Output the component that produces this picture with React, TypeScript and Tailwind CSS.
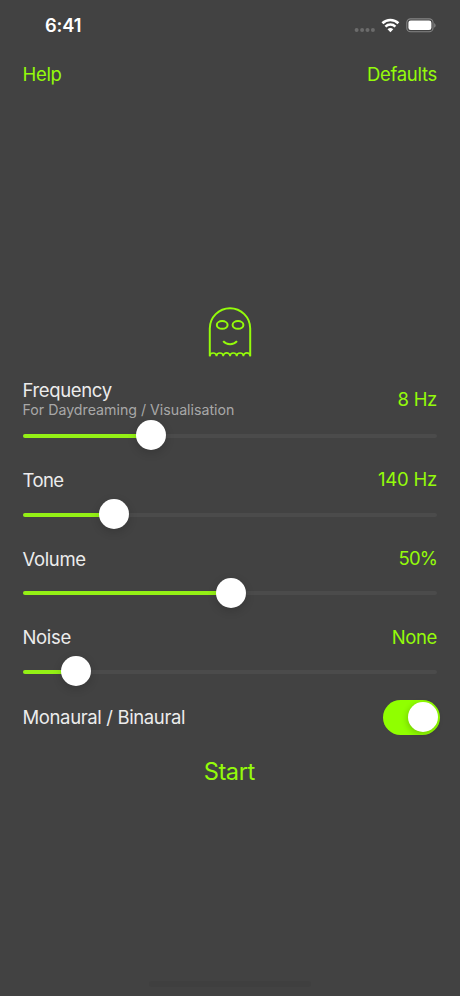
type Setting = {
  label: string;
  hint?: string;
  value: string;
  // thumb centre, in px from the start of the track
  position: number;
  labelTracking: string;
  valueTracking: string;
};

const settings: Setting[] = [
  { label: "Frequency", hint: "For Daydreaming / Visualisation", value: "8 Hz", position: 128.2, labelTracking: "tracking-[-0.35px]", valueTracking: "tracking-[-0.3px]" },
  { label: "Tone", value: "140 Hz", position: 91.5, labelTracking: "tracking-[-0.6px]", valueTracking: "tracking-[-0.2px]" },
  { label: "Volume", value: "50%", position: 208, labelTracking: "tracking-[-0.35px]", valueTracking: "tracking-[-0.9px]" },
  { label: "Noise", value: "None", position: 53.8, labelTracking: "tracking-[-0.35px]", valueTracking: "tracking-[-0.35px]" },
];

export default function App() {
  return (
    <div className="flex h-[996px] w-[460px] flex-col overflow-hidden bg-[#424242] font-['Inter',sans-serif] text-[18.5px] text-[#ececec]">
      <StatusBar />

      <nav className="flex h-11 items-center justify-between pl-[22.5px] pr-[23px] pt-px text-[#94fb0a]">
        <button className="tracking-[-0.3px]">Help</button>
        <button className="tracking-[-0.3px]">Defaults</button>
      </nav>

      <main className="flex flex-1 flex-col pl-[22.5px] pr-[23px] pt-[211px]">
        <Ghost />
        <div className="mt-[18px] flex flex-col">
          {settings.map((setting) => <SettingRow key={setting.label} setting={setting} />)}
        </div>

        <div className="mt-[8.5px] flex h-[35px] items-center justify-between">
          <span className="pt-px tracking-[-0.37px]">Monaural / Binaural</span>
          <Toggle />
        </div>

        <button className="mt-[19px] self-center pr-px text-[23.6px] leading-[36px] tracking-[-0.4px] text-[#94fb0a]">Start</button>
      </main>

      <div className="mb-[9px] h-[6px] w-[162px] self-center rounded-full bg-[#3f3f3f]" />
    </div>
  );
}

function StatusBar() {
  return (
    <header className="flex h-[52px] items-center justify-between pl-[45px] pr-6">
      <span className="text-[18.3px] font-semibold tracking-[-0.1px] text-white">6:41</span>
      <div className="flex items-center">
        <svg width="22" height="18" viewBox="0 0 22 18" fill="#6b6b6b">
          <circle cx="3.6" cy="13" r="2" />
          <circle cx="9.1" cy="13" r="2" />
          <circle cx="14.5" cy="13" r="2" />
          <circle cx="19.9" cy="13" r="2" />
        </svg>
        <svg className="ml-[6px]" width="19" height="18" viewBox="0 0 19 18" fill="none" stroke="#fff">
          <path d="M1.4 6.3a11.4 11.4 0 0 1 16 0" strokeWidth="2.6" />
          <path d="M4.4 9.6a7.2 7.2 0 0 1 10 0" strokeWidth="2.5" />
          <path d="M9.4 15.3 6.5 12.3a4.2 4.2 0 0 1 5.8 0Z" fill="#fff" stroke="none" />
        </svg>
        <svg className="ml-[6px]" width="30" height="18" viewBox="0 0 30 18" fill="none">
          <rect x="0.8" y="1.9" width="26.2" height="12.8" rx="3.8" stroke="#858585" strokeWidth="1.1" />
          <rect x="2.4" y="3.5" width="23" height="9.6" rx="2.3" fill="#fff" />
          <path d="M28.2 6.3v4.4c.9-.4 1.4-1.2 1.4-2.2s-.5-1.8-1.4-2.2Z" fill="#858585" />
        </svg>
      </div>
    </header>
  );
}

function Ghost() {
  return (
    <svg className="self-center" width="44" height="51" viewBox="0 0 44 51" fill="none" stroke="#94fb0a" strokeWidth="2">
      <path d="M1.8 49.2V21.4a20.2 20.2 0 0 1 40.4 0v27.8" />
      <path d="M1.8 49.2a3.37 3.4 0 0 1 6.73 0a3.37 3.4 0 0 1 6.73 0a3.37 3.4 0 0 1 6.74 0a3.37 3.4 0 0 1 6.73 0a3.37 3.4 0 0 1 6.73 0a3.37 3.4 0 0 1 6.74 0" strokeWidth="1.7" />
      <ellipse cx="14.2" cy="17.9" rx="5.4" ry="3.8" />
      <ellipse cx="30" cy="17.9" rx="5.4" ry="3.8" />
      <path d="M15.2 34.2c3.4 4 10.4 4 13.8 0" />
    </svg>
  );
}

function SettingRow({ setting }: { setting: Setting }) {
  return (
    <section className="flex h-[78.8px] flex-col">
      <div className={`flex h-[44px] items-center justify-between ${setting.hint ? "pt-[2px]" : "pt-[7px]"}`}>
        <div className={setting.hint ? "-mt-px flex flex-col" : "flex flex-col"}>
          <span className={`leading-[21px] ${setting.labelTracking}`}>{setting.label}</span>
          {setting.hint ? <span className="text-[14.2px] leading-[17px] text-[#a8a8a8]">{setting.hint}</span> : null}
        </div>
        <span className={`text-[#94fb0a] ${setting.hint ? "pt-px" : ""} ${setting.valueTracking}`}>{setting.value}</span>
      </div>
      <Slider position={setting.position} />
    </section>
  );
}

function Slider({ position }: { position: number }) {
  return (
    <div className="relative flex h-[30px] items-center">
      <div className="mt-[1.6px] h-1 w-full overflow-hidden rounded-full bg-[#4b4b4b]">
        <div className="h-full bg-[#94f015]" style={{ width: position }} />
      </div>
      <div
        className="absolute top-0 size-[30px] -translate-x-1/2 rounded-full bg-white shadow-[0_3px_10px_rgba(0,0,0,0.16)]"
        style={{ left: position }}
      />
    </div>
  );
}

function Toggle() {
  return (
    <div className="-mr-[3px] flex h-[35px] w-[57px] items-center justify-end rounded-full bg-[#90ff00] pr-[2px]">
      <div className="size-[30px] rounded-full bg-white shadow-[-1px_2px_6px_rgba(0,0,0,0.2)]" />
    </div>
  );
}
